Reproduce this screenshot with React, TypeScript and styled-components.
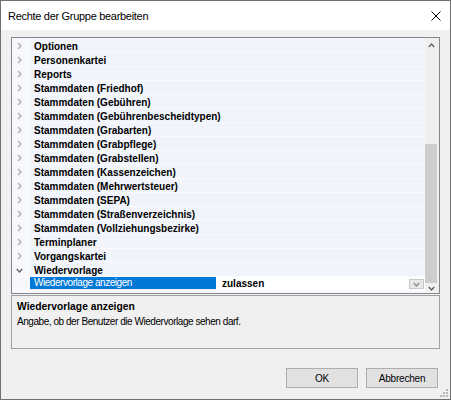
import React from 'react';
import styled, { createGlobalStyle } from 'styled-components';

const GlobalStyle = createGlobalStyle`
  html, body { margin: 0; padding: 0; background: #f0f0f0; }
  body { font-family: "Liberation Sans", Arial, sans-serif; }
  * { box-sizing: border-box; }
`;

const Window = styled.div`
  position: relative;
  width: 451px;
  height: 400px;
  border: 1px solid #707070;
  display: flex;
  flex-direction: column;
  background: #f0f0f0;
  overflow: hidden;
`;

const TitleBar = styled.div`
  height: 29px;
  flex: none;
  background: #ffffff;
  display: flex;
  align-items: center;
  justify-content: space-between;
  padding: 0 9px 0 7px;
`;

const Title = styled.span`
  font-size: 11px;
  letter-spacing: -0.3px;
  color: #000;
`;

const Body = styled.div`
  flex: 1;
  display: flex;
  flex-direction: column;
  padding: 7px 10px 0 10px;
`;

const TreePanel = styled.div`
  height: 257px;
  flex: none;
  border: 1px solid #828790;
  background: #ffffff;
  display: flex;
`;

const Rows = styled.div`
  flex: 1;
  display: flex;
  flex-direction: column;
  padding-top: 1px;
  background: #f7f8fc;
`;

const Row = styled.div`
  height: 14px;
  flex: none;
  display: flex;
  align-items: center;
  background: #f1f4fa;
  border-bottom: 1px solid #fafbfe;
`;

const Gutter = styled.div<{ $open?: boolean }>`
  width: 18px;
  height: 100%;
  flex: none;
  display: flex;
  align-items: center;
  padding-left: ${p => (p.$open ? 4 : 5)}px;
  padding-top: 1px;
  background: #f7f8fc;
`;

const Label = styled.span`
  padding-left: 4px;
  padding-top: 1px;
  font-size: 10px;
  font-weight: bold;
  line-height: 13px;
  color: #000;
  white-space: nowrap;
`;

const SelectedCell = styled.div`
  width: 186px;
  height: 12px;
  align-self: flex-start;
  flex: none;
  background: #0078d7;
  color: #fff;
  padding-left: 4px;
  font-size: 10px;
  letter-spacing: -0.45px;
  line-height: 12px;
  white-space: nowrap;
`;

const ValueCell = styled.div`
  flex: 1;
  height: 100%;
  background: #ffffff;
  display: flex;
  align-items: center;
  justify-content: space-between;
  padding-left: 6px;
  padding-right: 1px;
`;

const ValueText = styled.span`
  font-size: 10px;
  font-weight: bold;
  line-height: 13px;
  color: #000;
`;

const ComboButton = styled.div`
  width: 15px;
  height: 10px;
  align-self: flex-end;
  margin-bottom: 1px;
  background: #e8e8e8;
  border: 1px solid #c8c8c8;
  display: flex;
  align-items: center;
  justify-content: center;
`;

const ScrollBar = styled.div`
  width: 14px;
  flex: none;
  background: #f0f0f0;
  display: flex;
  flex-direction: column;
`;

const ScrollButton = styled.div<{ $h: number }>`
  height: ${p => p.$h}px;
  flex: none;
  display: flex;
  align-items: center;
  justify-content: center;
  padding-right: 2px;
`;

const Track = styled.div`
  flex: 1;
  display: flex;
  flex-direction: column;
  padding-right: 2px;
`;

const Thumb = styled.div`
  background: #cdcdcd;
  flex: none;
`;

const DescPanel = styled.div`
  margin-top: 1px;
  height: 54px;
  flex: none;
  border: 1px solid #a0a0a0;
  background: #f0f0f0;
  padding: 4px 5px 2px 5px;
`;

const DescTitle = styled.div`
  font-size: 10.3px;
  font-weight: bold;
  line-height: 14px;
  color: #000;
`;

const DescText = styled.div`
  margin-top: 1px;
  font-size: 10px;
  letter-spacing: -0.45px;
  line-height: 14px;
  color: #000;
`;

const ButtonRow = styled.div`
  margin-top: 19px;
  display: flex;
  justify-content: flex-end;
  gap: 8px;
  padding-right: 2px;
`;

const Button = styled.button`
  width: 72px;
  height: 20px;
  padding: 0;
  background: #e1e1e1;
  border: 1px solid #adadad;
  font-family: "Liberation Sans", Arial, sans-serif;
  font-size: 10px;
  letter-spacing: -0.2px;
  color: #000;
`;

const Grip = styled.svg`
  position: absolute;
  right: 1px;
  bottom: 1px;
`;

const ChevronRight = () => (
  <svg width="5" height="8" viewBox="0 0 5 8">
    <polyline points="1,1 4,4 1,7" fill="none" stroke="#a8a8a8" strokeWidth="1.2" />
  </svg>
);

const ChevronDown = ({ color = '#606060', w = 7 }: { color?: string; w?: number }) => (
  <svg width={w} height="5" viewBox={`0 0 ${w} 5`}>
    <polyline points={`0.8,1 ${w / 2},4 ${w - 0.8},1`} fill="none" stroke={color} strokeWidth="1.3" />
  </svg>
);

const ChevronUp = () => (
  <svg width="7" height="5" viewBox="0 0 7 5">
    <polyline points="0.8,4 3.5,1 6.2,4" fill="none" stroke="#606060" strokeWidth="1.3" />
  </svg>
);

const categories = [
  'Optionen',
  'Personenkartei',
  'Reports',
  'Stammdaten (Friedhof)',
  'Stammdaten (Gebühren)',
  'Stammdaten (Gebührenbescheidtypen)',
  'Stammdaten (Grabarten)',
  'Stammdaten (Grabpflege)',
  'Stammdaten (Grabstellen)',
  'Stammdaten (Kassenzeichen)',
  'Stammdaten (Mehrwertsteuer)',
  'Stammdaten (SEPA)',
  'Stammdaten (Straßenverzeichnis)',
  'Stammdaten (Vollziehungsbezirke)',
  'Terminplaner',
  'Vorgangskartei',
];

export default function App() {
  return (
    <>
      <GlobalStyle />
      <Window>
        <TitleBar>
          <Title>Rechte der Gruppe bearbeiten</Title>
          <svg width="10" height="10" viewBox="0 0 10 10">
            <path d="M0.5 0.5 L9.5 9.5 M9.5 0.5 L0.5 9.5" stroke="#000" strokeWidth="1" />
          </svg>
        </TitleBar>
        <Body>
          <TreePanel>
            <Rows>
              {categories.map(c => (
                <Row key={c}>
                  <Gutter>
                    <ChevronRight />
                  </Gutter>
                  <Label>{c}</Label>
                </Row>
              ))}
              <Row>
                <Gutter $open>
                  <ChevronDown />
                </Gutter>
                <Label>Wiedervorlage</Label>
              </Row>
              <Row>
                <Gutter />
                <SelectedCell>Wiedervorlage anzeigen</SelectedCell>
                <ValueCell>
                  <ValueText>zulassen</ValueText>
                  <ComboButton>
                    <ChevronDown color="#8a8a8a" w={7} />
                  </ComboButton>
                </ValueCell>
              </Row>
            </Rows>
            <ScrollBar>
              <ScrollButton $h={15}>
                <ChevronUp />
              </ScrollButton>
              <Track>
                <Thumb style={{ marginTop: 91, height: 139 }} />
              </Track>
              <ScrollButton $h={9}>
                <ChevronDown />
              </ScrollButton>
            </ScrollBar>
          </TreePanel>
          <DescPanel>
            <DescTitle>Wiedervorlage anzeigen</DescTitle>
            <DescText>Angabe, ob der Benutzer die Wiedervorlage sehen darf.</DescText>
          </DescPanel>
          <ButtonRow>
            <Button>OK</Button>
            <Button>Abbrechen</Button>
          </ButtonRow>
        </Body>
        <Grip width="10" height="10" viewBox="0 0 10 10">
          <g fill="#b8b8b8">
            <rect x="7" y="1" width="2" height="2" />
            <rect x="4" y="4" width="2" height="2" />
            <rect x="7" y="4" width="2" height="2" />
            <rect x="1" y="7" width="2" height="2" />
            <rect x="4" y="7" width="2" height="2" />
            <rect x="7" y="7" width="2" height="2" />
          </g>
        </Grip>
      </Window>
    </>
  );
}
